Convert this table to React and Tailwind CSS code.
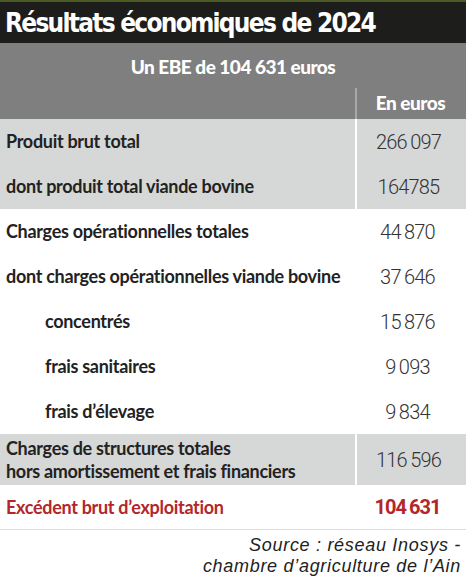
import React from 'react';

const rows = [
  { label: 'Produit brut total', value: '266\u2009097', shade: true },
  { label: 'dont produit total viande bovine', value: '164785', shade: true },
  { label: 'Charges opérationnelles totales', value: '44\u2009870' },
  { label: 'dont charges opérationnelles viande bovine', value: '37\u2009646' },
  { label: 'concentrés', value: '15\u2009876', indent: true },
  { label: 'frais sanitaires', value: '9\u2009093', indent: true },
  { label: 'frais d’élevage', value: '9\u2009834', indent: true },
];

function Row({ label, value, shade, indent }) {
  return (
    <div className={`grid grid-cols-[355px_1fr] h-[45px] ${shade ? 'bg-[#d6d7d7]' : 'bg-white'}`}>
      <div
        className={`flex items-center font-['Lato','Noto_Sans',sans-serif] text-[18px] font-bold text-[#222] tracking-[-0.3px] ${indent ? 'pl-[45px]' : 'pl-[6px]'}`}
      >
        {label}
      </div>
      <div
        className={`flex items-center justify-center pr-[6px] font-['Roboto','Liberation_Sans',sans-serif] text-[20px] font-light text-[#333] tracking-[-0.8px] ${shade ? 'border-l-2 border-white' : ''}`}
      >
        {value}
      </div>
    </div>
  );
}

export default function App() {
  return (
    <div className="w-[466px] h-[576px] overflow-hidden bg-white">
      <div className="h-[2px] bg-[#4b5a22]" />
      <div className="h-[41px] bg-[#1d1d1b] flex items-center pl-[5px]">
        <h1 className="font-['DejaVu_Sans_Condensed','Liberation_Sans_Narrow','Roboto',sans-serif] text-white text-[26px] font-bold tracking-[-1.75px] leading-none">
          Résultats économiques de 2024
        </h1>
      </div>

      {/* bandeau gris */}
      <div className="bg-[#7f7f7f] font-['Lato','Noto_Sans',sans-serif]">
        <div className="h-[45px] flex items-center justify-center pt-[4px]">
          <span className="text-white text-[19px] font-black tracking-[-0.5px]">
            Un EBE de 104 631 euros
          </span>
        </div>
        <div className="grid grid-cols-[355px_1fr] h-[31px]">
          <div />
          <div className="border-l-2 border-[#a9a9a9] flex items-center justify-center pr-[2px] text-white text-[19px] font-black tracking-[-0.5px]">
            En euros
          </div>
        </div>
      </div>

      {rows.map((r) => (
        <Row key={r.label} {...r} />
      ))}

      <div className="grid grid-cols-[355px_1fr] h-[51px] bg-[#d6d7d7]">
        <div className="flex flex-col justify-center pl-[6px] font-['Lato','Noto_Sans',sans-serif] text-[18px] font-bold text-[#222] leading-[23px] tracking-[-0.3px]">
          <span>Charges de structures totales</span>
          <span>hors amortissement et frais financiers</span>
        </div>
        <div className="border-l-2 border-white flex items-center justify-center pr-[6px] font-['Roboto','Liberation_Sans',sans-serif] text-[20px] font-light text-[#333] tracking-[-0.8px]">
          116{'\u2009'}596
        </div>
      </div>

      <div className="grid grid-cols-[355px_1fr] h-[45px] border-b border-[#dcdcdc]">
        <div className="flex items-center pl-[6px] font-['Lato','Noto_Sans',sans-serif] text-[18px] font-bold text-[#b3262a] tracking-[-0.3px]">
          Excédent brut d’exploitation
        </div>
        <div className="flex items-center justify-center pr-[6px] font-['Roboto','Liberation_Sans',sans-serif] text-[20px] font-bold text-[#b3262a] tracking-[-1px]">
          104{'\u2009'}631
        </div>
      </div>

      <div className="text-right pr-[5px] pt-[5px] font-['Liberation_Sans',Arial,sans-serif] text-[18px] italic text-[#222] leading-[21px] tracking-[0.7px]">
        <p>Source : réseau Inosys -</p>
        <p>chambre d’agriculture de l’Ain</p>
      </div>
    </div>
  );
}
